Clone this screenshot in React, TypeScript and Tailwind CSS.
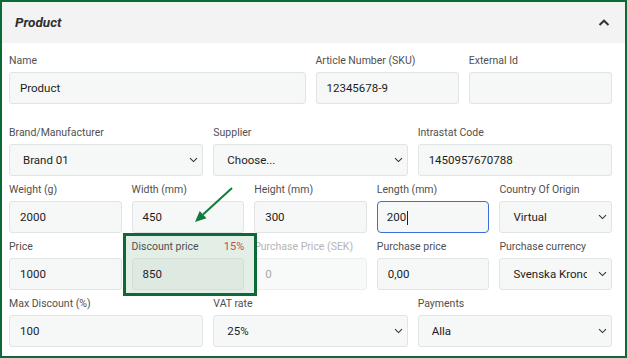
import type { ReactNode } from "react";

function Chevron() {
  return (
    <svg width="9" height="6" viewBox="0 0 9 6" className="shrink-0">
      <path d="M1 1.2l3.5 3.4L8 1.2" fill="none" stroke="#333" strokeWidth="1.1" />
    </svg>
  );
}

function Field({
  label,
  children,
  disabled,
  extra,
}: {
  label: string;
  children: ReactNode;
  disabled?: boolean;
  extra?: ReactNode;
}) {
  return (
    <div className="flex flex-col min-w-0">
      <div
        className={`flex items-center justify-between h-[14px] mb-[4px] text-[10.5px] leading-[14px] whitespace-nowrap ${
          disabled ? "text-[#b4b4b4]" : "text-[#505050]"
        }`}
      >
        <span>{label}</span>
        {extra}
      </div>
      {children}
    </div>
  );
}

function TextInput({ value, disabled }: { value: string; disabled?: boolean }) {
  return (
    <div
      className={`h-[32px] flex items-center px-[10px] pt-[1px] rounded-[3px] border text-[11.5px] ${
        disabled
          ? "bg-[#f8f9f9] border-[#eceeee] text-[#a8a8a8]"
          : "bg-[#f6f8f8] border-[#e1e4e4] text-[#1c1c1c]"
      }`}
    >
      {value}
    </div>
  );
}

function Select({ value }: { value: string }) {
  return (
    <div className="h-[32px] flex items-center pl-[13px] pr-[4px] rounded-[3px] border border-[#e1e4e4] bg-[#f6f8f8] text-[11.5px] text-[#1c1c1c]">
      <span className="flex-1 min-w-0 overflow-hidden whitespace-nowrap mr-[11px] pt-[1px]">{value}</span>
      <Chevron />
    </div>
  );
}

export default function App() {
  return (
    <div className="relative w-[627px] h-[358px] overflow-hidden border-2 border-[#0c6a36] bg-white font-['Roboto',sans-serif]">
      {/* Header */}
      <div className="h-[41px] bg-[#f3f3f3] flex items-center justify-between pl-[13px] pr-[15px]">
        <span className="text-[13.5px] font-bold italic text-[#2e2e2e]">Product</span>
        <svg width="12" height="7" viewBox="0 0 12 7">
          <path d="M1.5 6l4.5-4.3L10.5 6" fill="none" stroke="#333" strokeWidth="2" />
        </svg>
      </div>

      <div className="pl-[7px] pr-[13px] pt-[11px] flex flex-col gap-[7px]">
        <div className="grid grid-cols-4 gap-x-[10px] mb-[15px]">
          <div className="col-span-2">
            <Field label="Name">
              <TextInput value="Product" />
            </Field>
          </div>
          <Field label="Article Number (SKU)">
            <TextInput value="12345678-9" />
          </Field>
          <Field label="External Id">
            <TextInput value="" />
          </Field>
        </div>

        <div className="grid grid-cols-3 gap-x-[10px]">
          <Field label="Brand/Manufacturer">
            <Select value="Brand 01" />
          </Field>
          <Field label="Supplier">
            <Select value="Choose..." />
          </Field>
          <Field label="Intrastat Code">
            <TextInput value="1450957670788" />
          </Field>
        </div>

        <div className="grid grid-cols-5 gap-x-[10px]">
          <Field label="Weight (g)">
            <TextInput value="2000" />
          </Field>
          <Field label="Width (mm)">
            <TextInput value="450" />
          </Field>
          <Field label="Height (mm)">
            <TextInput value="300" />
          </Field>
          <Field label="Length (mm)">
            <div className="h-[32px] flex items-center px-[9px] pt-[1px] rounded-[4px] border-[1.5px] border-[#3a6fd6] bg-[#f6f8f8] text-[11.5px] text-[#1c1c1c]">
              200
              <span className="w-[1px] h-[14px] bg-[#222] ml-[1px]" />
            </div>
          </Field>
          <Field label="Country Of Origin">
            <Select value="Virtual" />
          </Field>
        </div>

        <div className="grid grid-cols-5 gap-x-[10px]">
          <Field label="Price">
            <TextInput value="1000" />
          </Field>
          <div className="relative">
            <div className="absolute -left-[9px] -right-[13px] -top-[7px] -bottom-[6px] z-10 border-[3px] border-[#0c6a36] bg-[#e3eee7]" />
            <div className="relative z-20">
              <Field
                label="Discount price"
                extra={<span className="text-[11px] text-[#c0504d]">15%</span>}
              >
                <div className="h-[32px] flex items-center px-[10px] pt-[1px] rounded-[3px] border border-[#d2ddd6] bg-[#dee9e2] text-[11.5px] text-[#1c1c1c]">
                  850
                </div>
              </Field>
            </div>
          </div>
          <Field label="Purchase Price (SEK)" disabled>
            <TextInput value="0" disabled />
          </Field>
          <Field label="Purchase price">
            <TextInput value="0,00" />
          </Field>
          <Field label="Purchase currency">
            <Select value="Svenska Kronor" />
          </Field>
        </div>

        <div className="grid grid-cols-3 gap-x-[10px]">
          <Field label="Max Discount (%)">
            <TextInput value="100" />
          </Field>
          <Field label="VAT rate">
            <Select value="25%" />
          </Field>
          <Field label="Payments">
            <Select value="Alla" />
          </Field>
        </div>
      </div>

      {/* annotation arrow */}
      <svg
        className="absolute left-[188px] top-[182px] pointer-events-none"
        width="48"
        height="44"
        viewBox="0 0 48 44"
      >
        <line x1="42" y1="4" x2="13" y2="30.5" stroke="#117a3c" strokeWidth="2" />
        <polygon points="5,38 16.5,34.2 9.7,26.9" fill="#117a3c" />
      </svg>
    </div>
  );
}
